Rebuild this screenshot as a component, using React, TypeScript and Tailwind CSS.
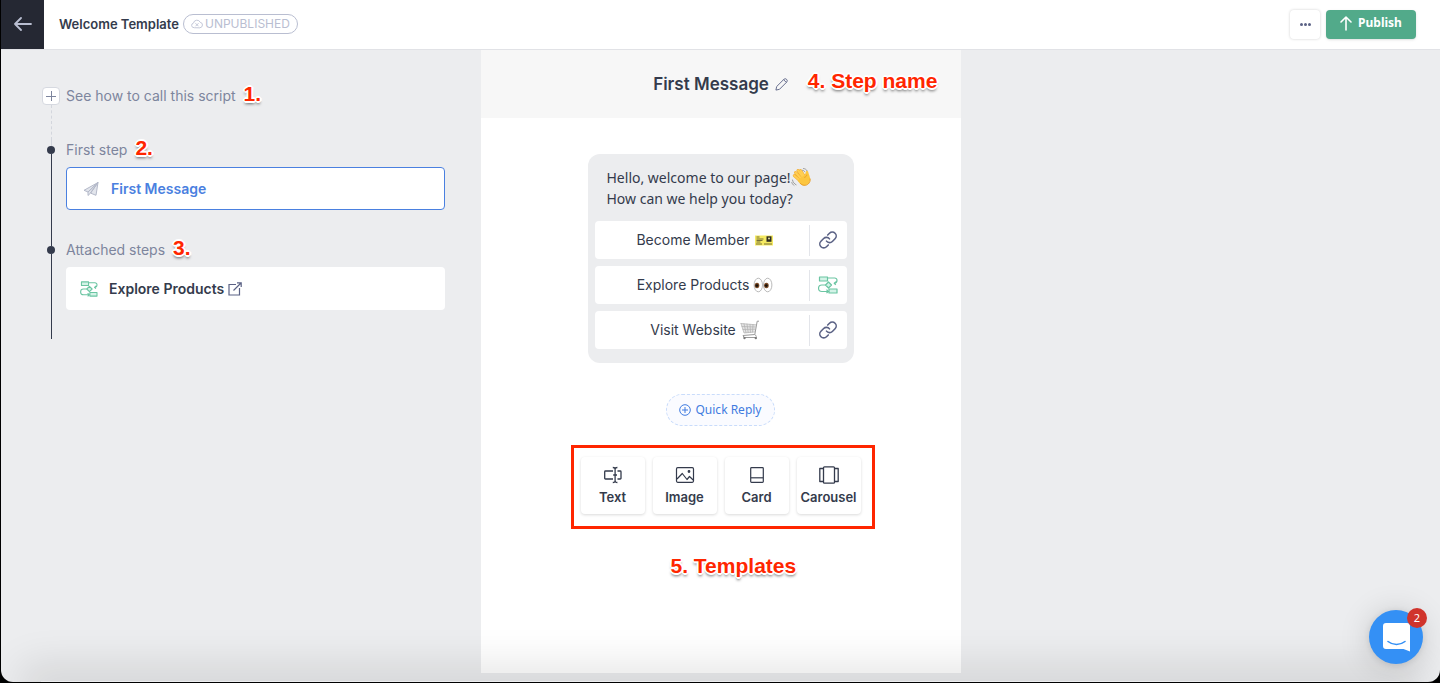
import React from 'react';

type IconProps = { className?: string };

const ArrowLeftIcon: React.FC<IconProps> = ({ className }) => (
    <svg className={className} viewBox="0 0 18 14" fill="none" stroke="currentColor" strokeWidth="1.8" strokeLinecap="round" strokeLinejoin="round">
        <path d="M17 7H1M7 1 1 7l6 6" />
    </svg>
);

const CloudOffIcon: React.FC<IconProps> = ({ className }) => (
    <svg className={className} viewBox="0 0 24 18" fill="none" stroke="currentColor" strokeWidth="1.7" strokeLinecap="round" strokeLinejoin="round">
        <path d="M6 16.5a4.7 4.7 0 0 1-1-9.3A7 7 0 0 1 18.300 5.500a5.600 5.600 0 0 1 .2 11z" />
        <path d="m9.500 8 5 5m0-5-5 5" />
    </svg>
);

const ArrowUpIcon: React.FC<IconProps> = ({ className }) => (
    <svg className={className} viewBox="0 0 12 15" fill="none" stroke="currentColor" strokeWidth="1.600" strokeLinecap="round" strokeLinejoin="round">
        <path d="M6 14V1M1 6l5-5 5 5" />
    </svg>
);

const PlaneIcon: React.FC<IconProps> = ({ className }) => (
    <svg className={className} viewBox="0 0 16 16" fill="#e2e5ec" stroke="currentColor" strokeWidth="1" strokeLinejoin="round">
        <path d="M15 1.500 1 9.300l4 1.700zM15 1.500 5 11v3.500l2.500-2.400zM15 1.500 7.500 12.100l5.500 2.200z" />
    </svg>
);

const FlowIcon: React.FC<IconProps> = ({ className }) => (
    <svg className={className} viewBox="0 0 20 18" fill="none" stroke="#6bc5a2" strokeWidth="1.2" strokeLinejoin="round">
        <rect x="1.500" y="1" width="8" height="4" fill="#d3f3e7" />
        <rect x="11" y="13" width="8" height="4" fill="#d3f3e7" />
        <path d="m10.500 6 3 3-3 3-3-3z" fill="#d3f3e7" />
        <path d="M9.500 2h7.200a2.300 2.300 0 0 1 2.300 2.300c0 1.700-1 2.700-2.500 2.900M18 5.600l-1.800 1.600 1.600 1.500" />
        <path d="M7.500 9H3.800a3.200 3.200 0 0 0 0 6.500H11M8.500 13.700l1.700 1.800-1.700 1.700" />
    </svg>
);

const ExternalIcon: React.FC<IconProps> = ({ className }) => (
    <svg className={className} viewBox="0 0 14 14" fill="none" stroke="currentColor" strokeWidth="1.200">
        <path d="M8 2.500H1v10.500h10.500V6M9 .8h4.200V5M13 1 5.500 8.500" />
    </svg>
);

const PencilIcon: React.FC<IconProps> = ({ className }) => (
    <svg className={className} viewBox="0 0 14 14" fill="none" stroke="currentColor" strokeWidth="1" strokeLinejoin="round">
        <path d="m1 13 .8-3.800 7.700-7.700a2.100 2.100 0 0 1 3 3l-7.700 7.700zM9.200 1.800l3 3" />
    </svg>
);

const LinkIcon: React.FC<IconProps> = ({ className }) => (
    <svg className={className} viewBox="0 0 24 24" fill="none" stroke="currentColor" strokeWidth="2.100" strokeLinecap="round">
        <path d="M10 13.500a5.200 5.200 0 0 0 7.800.5l3.600-3.600a5.200 5.200 0 0 0-7.400-7.400l-2.400 2.400" />
        <path d="M14 10.500a5.200 5.200 0 0 0-7.800-.5l-3.600 3.600A5.200 5.200 0 0 0 10 21l2.400-2.400" />
    </svg>
);

const CirclePlusIcon: React.FC<IconProps> = ({ className }) => (
    <svg className={className} viewBox="0 0 12 12" fill="none" stroke="currentColor" strokeWidth="1">
        <circle cx="6" cy="6" r="5.300" />
        <path d="M6 3v6M3 6h6" />
    </svg>
);

const TextIcon: React.FC<IconProps> = ({ className }) => (
    <svg className={className} viewBox="0 0 20 18" fill="none" stroke="currentColor" strokeWidth="1.300" strokeLinejoin="round">
        <path d="M10 13H2.500a.8.8 0 0 1-.8-.8V5.800a.8.800 0 0 1 .8-.8H10M14.500 5h2.700a.8.800 0 0 1 .8.8v6.400a.8.800 0 0 1-.8.800h-2.700" />
        <path d="M9.800 1.500c1.500 0 2.300.5 2.300 1.500v12c0 1-.8 1.500-2.300 1.500M14.400 1.500c-1.500 0-2.300.5-2.300 1.500M14.400 16.500c-1.500 0-2.300-.5-2.300-1.500M10.200 9H14" />
    </svg>
);

const ImageIcon: React.FC<IconProps> = ({ className }) => (
    <svg className={className} viewBox="0 0 20 18" fill="none" stroke="currentColor" strokeWidth="1.200" strokeLinejoin="round">
        <rect x="1.500" y="1.700" width="17" height="14.600" rx="1.200" />
        <path d="m2 13 5.300-5.500 4.700 6 2.500-3 3.700 3.500" />
        <circle cx="14" cy="5.500" r=".8" fill="currentColor" />
    </svg>
);

const CardIcon: React.FC<IconProps> = ({ className }) => (
    <svg className={className} viewBox="0 0 20 18" fill="none" stroke="currentColor" strokeWidth="1.200" strokeLinejoin="round">
        <rect x="3.700" y="1.700" width="12.600" height="14.600" rx=".8" />
        <path d="M4 11.800h12" />
    </svg>
);

const CarouselIcon: React.FC<IconProps> = ({ className }) => (
    <svg className={className} viewBox="0 0 20 18" fill="none" stroke="currentColor" strokeWidth="1.300" strokeLinejoin="round">
        <rect x="4.500" y=".8" width="11" height="16.400" rx="1" />
        <path d="M4.500 2.500H.8v13h3.700M15.500 2.500h3.700v13h-3.700" />
    </svg>
);

const WaveEmoji: React.FC<IconProps> = ({ className }) => (
    <svg className={className} viewBox="0 0 20 20" role="img" aria-label="waving hand">
        <path d="M1.500 13c.4 2.200 1.600 3.800 3.600 4.800M.8 15.500c.4 1.300 1.100 2.200 2.200 2.900M12.500 1.500c1.700.2 2.900 1 3.700 2.400M11.500 3.300c1 .1 1.800.6 2.300 1.400" fill="none" stroke="#9b9b9b" strokeWidth="1" strokeLinecap="round" />
        <g stroke="#f0a933" strokeWidth="3" strokeLinecap="round">
            <path d="m10.500 12-6-6.500M12 10.500 7 3.500M13.500 9.500l-4-6M9.500 14 3.300 8.700" />
        </g>
        <g stroke="#ffcf52" strokeWidth="2" strokeLinecap="round">
            <path d="m10.500 12-6-6.500M12 10.500 7 3.500M13.500 9.500l-4-6M9.500 14 3.300 8.700" />
        </g>
        <path d="M7.500 12.500 13.800 8c.8-1.600.7-2.800 1.200-3.600.6-.8 2.100-.4 2.300.8.300 1.700 2 4.300 1.800 7.300-.2 3.200-2.600 5.700-5.700 5.900-2.500.1-4.800-2-6.600-4.500z" fill="#fcc63f" />
        <path d="M13.300 10.500c1.300-.5 2.300-1.400 2.500-2.800M9 16c2.200 2.800 6 3 8.200 1 1.600-1.400 2.200-3.400 1.900-5.500" fill="none" stroke="#e9a02c" strokeWidth="1" />
    </svg>
);

const TicketEmoji: React.FC<IconProps> = ({ className }) => (
    <svg className={className} viewBox="0 0 20 20" role="img" aria-label="ticket">
        <rect x="1" y="5.500" width="18" height="10" fill="#f5ea62" />
        <path d="M2.500 7h3M2.500 9h7M2.500 10.500h6M2.500 12h4M2 14h6M10 14h8" stroke="#55502b" strokeWidth=".8" />
        <rect x="12.500" y="6.300" width="5" height="5.500" fill="#2f2d22" />
        <circle cx="15" cy="8.500" r="1" fill="#e5e0a0" />
    </svg>
);

const EyesEmoji: React.FC<IconProps> = ({ className }) => (
    <svg className={className} viewBox="0 0 20 20" role="img" aria-label="eyes">
        <g fill="#fff" stroke="#a8a8a8" strokeWidth=".8">
            <ellipse cx="5.300" cy="10" rx="4.200" ry="6.800" />
            <ellipse cx="14.700" cy="10" rx="4.200" ry="6.800" />
        </g>
        <ellipse cx="4" cy="10.500" rx="2.300" ry="2.800" fill="#7a4a26" />
        <ellipse cx="13.400" cy="10.500" rx="2.300" ry="2.800" fill="#7a4a26" />
        <circle cx="3.900" cy="10.600" r="1.400" fill="#17100b" />
        <circle cx="13.300" cy="10.600" r="1.400" fill="#17100b" />
    </svg>
);

const CartEmoji: React.FC<IconProps> = ({ className }) => (
    <svg className={className} viewBox="0 0 20 20" role="img" aria-label="shopping cart">
        <path d="m1 3.500 14.800 1.300L14.500 12 4 13z" fill="#e3e3e3" />
        <g fill="none" stroke="#b0b0b0" strokeWidth=".7" strokeLinecap="round">
            <path d="m1 3.500 3 9.500 10.500-1M1 3.500l14.800 1.300M4 3.800 6 12.700M7 4l1.200 8.500M10 4.300l.5 8M13 4.500 12.500 12M2 6.500l13.300.5M3 9.500l12-.3" />
        </g>
        <path d="M19 1.200h-1.800L14.800 14.500 3 15.500M15 14.500l1.500 2M3 15.500l1 2h11" fill="none" stroke="#9a9a9a" strokeWidth="1" />
        <circle cx="4.500" cy="18" r="1.200" fill="#7a7a7a" />
        <circle cx="15.800" cy="18" r="1.200" fill="#7a7a7a" />
    </svg>
);

const Note: React.FC<{ className?: string; children: React.ReactNode }> = ({ className = '', children }) => (
    <span className={`pointer-events-none whitespace-nowrap font-['Liberation_Sans',Arial,sans-serif] text-[21px] leading-4 font-bold text-[#ff2600] [text-shadow:1px_0_0_#fff,-1px_0_0_#fff,0_1px_0_#fff,0_-1px_0_#fff,1px_1px_0_#fff,-1px_1px_0_#fff,1px_-1px_0_#fff,-1px_-1px_0_#fff,2px_0_0_#fff,-2px_0_0_#fff,0_2px_0_#fff,0_-2px_0_#fff,0_3px_3px_#00000099] ${className}`}>
        {children}
    </span>
);

const replyButtons = [
    { label: 'Become Member', Emoji: TicketEmoji, kind: 'link' },
    { label: 'Explore Products', Emoji: EyesEmoji, kind: 'flow' },
    { label: 'Visit Website', Emoji: CartEmoji, kind: 'link' },
];

const templates = [
    { label: 'Text', Icon: TextIcon },
    { label: 'Image', Icon: ImageIcon },
    { label: 'Card', Icon: CardIcon },
    { label: 'Carousel', Icon: CarouselIcon },
];

const Header: React.FC = () => (
    <header className="flex items-center h-[50px] shrink-0 bg-white border-b border-[#e1e2e6]">
        <button aria-label="Back" className="flex items-center justify-center w-[43px] h-full pb-[2px] bg-[#252833] text-[#b9bed1]">
            <ArrowLeftIcon className="w-[18px] h-[14px]" />
        </button>
        <div className="flex items-center gap-1 pl-[15px] pb-[2px]">
            <h1 className="text-[13px] leading-5 font-semibold text-[#343b4c]">Welcome Template</h1>
            <span className="flex items-center gap-[2px] h-5 px-[7px] rounded-full border border-[#b9bed1] text-xs text-[#b9bed1]">
                <CloudOffIcon className="w-3 h-[10px]" />
                UNPUBLISHED
            </span>
        </div>
        <div className="ml-auto mr-6 flex items-center gap-[6px]">
            <button aria-label="More" className="flex items-center justify-center gap-px w-[30px] h-[29px] pb-px rounded bg-white shadow-[0_0_3px_#00000030] text-[#5b6285]">
                <span className="size-[3px] rounded-full bg-current" />
                <span className="size-[3px] rounded-full bg-current" />
                <span className="size-[3px] rounded-full bg-current" />
            </button>
            <button className="flex items-center justify-center gap-[6px] w-[90px] h-[29px] pb-[2px] rounded bg-[#52aa8a] shadow-sm font-['Noto_Sans',sans-serif] text-xs font-bold text-white">
                <ArrowUpIcon className="w-3 h-[15px]" />
                <span className="pb-px">Publish</span>
            </button>
        </div>
    </header>
);

const Sidebar: React.FC = () => (
    <aside className="pt-9 pl-[41px] pr-9 text-sm leading-5 text-[#7d859d]">
        <div className="flex gap-[6px] h-[54px]">
            <div className="flex flex-col items-center w-[18px] pt-px">
                <button aria-label="Show how to call this script" className="relative size-[18px] rounded-sm border border-[#d6d9e0] bg-white">
                    <span className="absolute inset-x-[3px] top-1/2 h-px bg-[#7d859d]" />
                    <span className="absolute inset-y-[3px] left-1/2 w-px bg-[#7d859d]" />
                </button>
                <span className="flex-1 border-l border-dashed border-[#d3d6dd]" />
            </div>
            <div className="flex items-start gap-2">
                <a href="#script">See how to call this script</a>
                <Note>1.</Note>
            </div>
        </div>
        <section className="flex gap-[6px]">
            <div className="flex flex-col items-center w-[18px]">
                <span className="h-[6px] border-l border-dashed border-[#d3d6dd]" />
                <span className="size-2 rounded-full bg-[#343b4c]" />
                <span className="flex-1 w-px bg-[#343b4c]" />
            </div>
            <div className="flex-1 pb-[30px]">
                <h2 className="flex items-start gap-2">First step <Note>2.</Note></h2>
                <button className="mt-[7px] flex items-center w-full h-[43px] pl-4 rounded-sm border border-[#4a80e0] bg-white font-semibold text-[#4a80e0]">
                    <PlaneIcon className="size-4 mr-3 text-[#b4b9c9]" />
                    First Message
                </button>
            </div>
        </section>
        <section className="flex gap-[6px]">
            <div className="flex flex-col items-center w-[18px]">
                <span className="h-[6px] w-px bg-[#343b4c]" />
                <span className="size-2 rounded-full bg-[#343b4c]" />
                <span className="flex-1 w-px bg-[#343b4c]" />
            </div>
            <div className="flex-1 pb-[29px]">
                <h2 className="flex items-start gap-2">Attached steps <Note>3.</Note></h2>
                <button className="mt-[7px] flex items-center w-full h-[43px] pl-[14px] rounded-sm bg-white font-semibold text-[#343b4c]">
                    <FlowIcon className="w-[18px] h-4 mr-[11px]" />
                    Explore Products
                    <ExternalIcon className="size-[14px] ml-1 text-[#5b6285]" />
                </button>
            </div>
        </section>
    </aside>
);

const MessageBubble: React.FC = () => (
    <div className="w-[266px] mt-9 px-[7px] pt-[13px] pb-[14px] rounded-xl bg-[#ecedef] text-sm text-[#343b4c]">
        <p className="px-3 leading-[21px] font-['Noto_Sans',sans-serif]">
            Hello, welcome to our page!
            <WaveEmoji className="inline-block size-5 -mt-2 -mb-1" />
            <br />
            How can we help you today?
        </p>
        <div className="mt-3 flex flex-col gap-[7px]">
            {replyButtons.map(({ label, Emoji, kind }) => (
                <div key={label} className="flex items-center h-[38px] rounded bg-white">
                    <button className="flex-1 flex items-center justify-center gap-1 pl-[7px]">
                        {label}
                        <Emoji className="size-5" />
                    </button>
                    <button aria-label={`Edit ${label}`} className="flex items-center justify-center w-[38px] h-[31px] border-l border-[#e3e5ea] text-[#5b6285]">
                        {kind === 'link' ? <LinkIcon className="size-[18px]" /> : <FlowIcon className="w-5 h-[18px]" />}
                    </button>
                </div>
            ))}
        </div>
    </div>
);

const StepEditor: React.FC = () => (
    <main className="flex flex-col items-center mb-[9px] bg-white">
        <div className="flex items-center justify-center w-full h-[68px] bg-[#f7f7f7]">
            <div className="relative flex items-center gap-[6px] text-[#343b4c]">
                <h2 className="text-[17px] leading-6 font-semibold">First Message</h2>
                <button aria-label="Rename step"><PencilIcon className="size-[13px] text-[#5b6285]" /></button>
                <Note className="absolute left-full bottom-[7px] ml-5">4. Step name</Note>
            </div>
        </div>
        <MessageBubble />
        <button className="mt-[31px] flex items-center gap-1 h-8 px-3 rounded-full border border-dashed border-[#c9dcfb] bg-[#fafbff] font-['Noto_Sans',sans-serif] text-xs text-[#3f7be0]">
            <CirclePlusIcon className="size-3" />
            Quick Reply
        </button>
        <div className="relative mt-[31px] flex gap-2">
            {templates.map(({ label, Icon }) => (
                <button key={label} className="flex flex-col items-center gap-[5px] w-16 h-[57px] pt-[9px] rounded bg-white shadow-[0_1px_3px_#00000026] text-[13px] leading-4 font-semibold text-[#343b4c]">
                    <Icon className="w-5 h-[18px]" />
                    {label}
                </button>
            ))}
            <div className="absolute -left-[10px] -right-[14px] -top-3 -bottom-[15px] border-3 border-[#ff2600] pointer-events-none" />
            <Note className="absolute left-[90px] top-full mt-11">5. Templates</Note>
        </div>
    </main>
);

const ChatLauncher: React.FC = () => (
    <button aria-label="Open chat" className="absolute right-[17px] bottom-[18px] flex items-center justify-center size-[54px] rounded-full bg-[#3490f5] shadow-[0_1px_6px_#0000001a,0_2px_32px_#00000029]">
        <svg className="w-[27px] h-[29px]" viewBox="0 0 27 29" fill="none">
            <path d="M3 0h21a3 3 0 0 1 3 3v25.500L20.500 26H3a3 3 0 0 1-3-3V3a3 3 0 0 1 3-3z" fill="#fff" />
            <path d="M5 18.500c5 4 12 4 17 0" stroke="#3490f5" strokeWidth="1.600" strokeLinecap="round" />
        </svg>
        <span className="absolute -top-[2px] -right-1 flex items-center justify-center size-5 rounded-full bg-[#d0342c] font-['Noto_Sans',sans-serif] text-[11px] text-white">2</span>
    </button>
);

const App: React.FC = () => {
    return (
        <div className="min-h-screen flex bg-black pl-px pb-px font-[Inter,sans-serif]">
            <div className="relative flex-1 flex flex-col overflow-hidden rounded-b-xl bg-[#ecedef]">
                <Header />
                <div className="flex-1 grid grid-cols-[1fr_480px_1fr]">
                    <Sidebar />
                    <StepEditor />
                </div>
                {/* soft shade along the bottom edge of the window */}
                <div className="absolute inset-x-10 bottom-0 h-px shadow-[0_4px_40px_20px_#0000001c] pointer-events-none" />
                <ChatLauncher />
            </div>
        </div>
    );
};

export default App;
